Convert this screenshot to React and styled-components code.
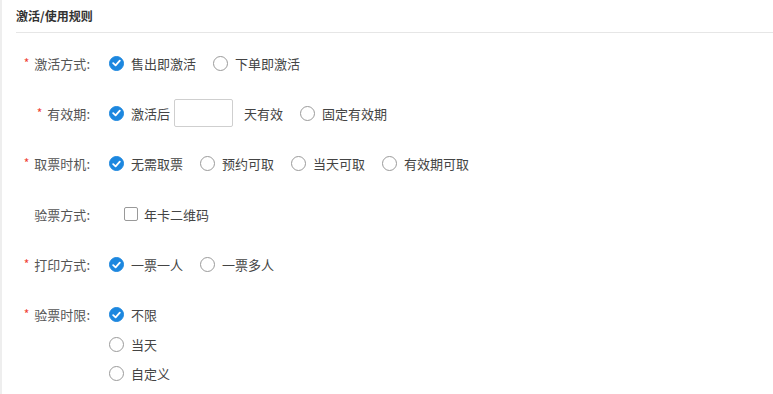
import React from 'react';
import styled, { createGlobalStyle } from 'styled-components';

const GlobalStyle = createGlobalStyle`
  html, body {
    margin: 0;
    padding: 0;
    background: #fff;
  }
  body {
    font-family: "Noto Sans CJK SC", "Noto Sans", sans-serif;
    font-size: 13px;
    color: #444;
  }
`;

const Page = styled.div`
  min-height: 394px;
  border-left: 2px solid #eeeeee;
  box-sizing: border-box;
`;

const Header = styled.div`
  margin-left: 14px;
  height: 33px;
  border-bottom: 1px solid #e6e6e6;
  display: flex;
  align-items: center;
  padding-bottom: 1px;
  box-sizing: border-box;
  font-size: 12px;
  font-weight: bold;
  color: #333;
`;

const Form = styled.div`
  padding: 15px 0 0 14px;
`;

const Row = styled.div`
  display: flex;
  align-items: flex-start;
  margin-bottom: 20.4px;
`;

const Label = styled.div`
  width: 74px;
  height: 30px;
  flex-shrink: 0;
  display: flex;
  align-items: center;
  justify-content: flex-end;
  color: #555;
  white-space: nowrap;
`;

const Star = styled.span`
  color: #f04134;
  font-size: 12px;
  margin-right: 5px;
  position: relative;
  top: -1px;
`;

const Controls = styled.div`
  margin-left: 19px;
  padding-left: ${p => (p.$indent ? '15px' : '0')};
  display: flex;
  flex-direction: ${p => (p.$vertical ? 'column' : 'row')};
  align-items: ${p => (p.$vertical ? 'flex-start' : 'center')};
`;

const Option = styled.label`
  display: flex;
  align-items: center;
  height: ${p => (p.$vertical ? '29.5px' : '30px')};
  margin-right: 17px;
  color: #444;
  white-space: nowrap;
  cursor: pointer;
`;

const Dot = styled.span`
  width: 15px;
  height: 15px;
  box-sizing: border-box;
  border-radius: 50%;
  border: 1px solid ${p => (p.$checked ? '#1c87df' : '#9a9a9a')};
  background: ${p => (p.$checked ? '#1c87df' : '#fff')};
  margin-right: 7px;
  display: flex;
  align-items: center;
  justify-content: center;
  flex-shrink: 0;
`;

const Box = styled.span`
  width: 14px;
  height: 14px;
  box-sizing: border-box;
  border: 1px solid #999;
  border-radius: 2px;
  background: #fff;
  margin-right: 6px;
  flex-shrink: 0;
`;

const DaysInput = styled.input`
  width: 59px;
  height: 28px;
  box-sizing: border-box;
  border: 1px solid #cfcfcf;
  border-radius: 2px;
  margin: 0 11px 0 4px;
  outline: none;
  font-size: 13px;
`;

const Check = () => (
  <svg width="9" height="8" viewBox="0 0 9 8">
    <path d="M1.2 4.2 L3.6 6.4 L7.8 1.6" fill="none" stroke="#fff" strokeWidth="1.8" strokeLinecap="round" strokeLinejoin="round" />
  </svg>
);

function Radio({ checked, children, vertical }) {
  return (
    <Option $vertical={vertical}>
      <Dot $checked={checked}>{checked && <Check />}</Dot>
      {children}
    </Option>
  );
}

function Field({ label, required }) {
  return (
    <Label>
      {required && <Star>*</Star>}
      {label}:
    </Label>
  );
}

export default function App() {
  return (
    <>
      <GlobalStyle />
      <Page>
        <Header>激活/使用规则</Header>
        <Form>
          <Row>
            <Field label="激活方式" required />
            <Controls>
              <Radio checked>售出即激活</Radio>
              <Radio>下单即激活</Radio>
            </Controls>
          </Row>
          <Row>
            <Field label="有效期" required />
            <Controls>
              <Option>
                <Dot $checked><Check /></Dot>
                激活后
                <DaysInput type="text" />
                天有效
              </Option>
              <Radio>固定有效期</Radio>
            </Controls>
          </Row>
          <Row>
            <Field label="取票时机" required />
            <Controls>
              <Radio checked>无需取票</Radio>
              <Radio>预约可取</Radio>
              <Radio>当天可取</Radio>
              <Radio>有效期可取</Radio>
            </Controls>
          </Row>
          <Row>
            <Field label="验票方式" />
            <Controls $indent>
              <Option>
                <Box />
                年卡二维码
              </Option>
            </Controls>
          </Row>
          <Row>
            <Field label="打印方式" required />
            <Controls>
              <Radio checked>一票一人</Radio>
              <Radio>一票多人</Radio>
            </Controls>
          </Row>
          <Row>
            <Field label="验票时限" required />
            <Controls $vertical>
              <Radio vertical checked>不限</Radio>
              <Radio vertical>当天</Radio>
              <Radio vertical>自定义</Radio>
            </Controls>
          </Row>
        </Form>
      </Page>
    </>
  );
}
